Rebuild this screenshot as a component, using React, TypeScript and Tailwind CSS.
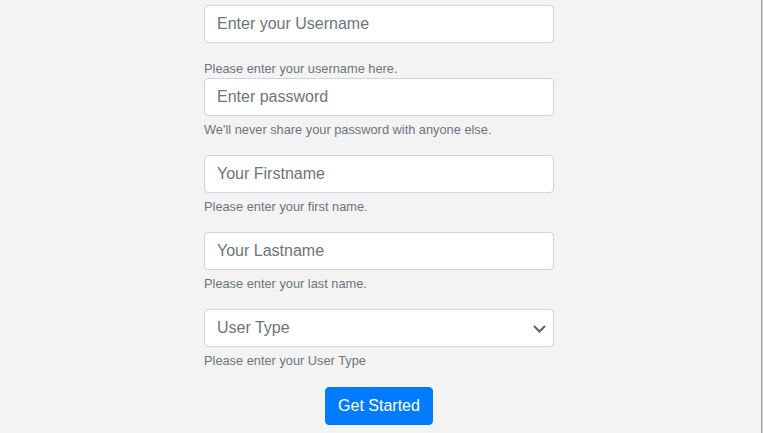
import { useState } from "react";

const fieldBase =
  "block w-full h-[38px] px-3 text-[16px] leading-6 bg-white border border-[#ced4da] rounded-[4px] outline-none";

const inputCls = `${fieldBase} text-[#495057] placeholder:text-[#6c757d]`;

const helpCls = "block text-[12.8px] leading-[19px] text-[#6c757d]";

export default function App() {
  const [userType, setUserType] = useState("");

  return (
    <div
      className="flex w-full h-[433px] bg-[#f3f3f3]"
      style={{ fontFamily: '"Liberation Sans", Arial, sans-serif' }}
    >
      <div className="w-[758px] pt-[5px]">
        <form className="w-[350px] mx-auto" onSubmit={(e) => e.preventDefault()}>
          <div>
            <input type="text" placeholder="Enter your Username" className={inputCls} />
            <small className={`${helpCls} mt-[16px]`}>Please enter your username here.</small>
          </div>

          <div className="mb-4">
            <input type="password" placeholder="Enter password" className={inputCls} />
            <small className={`${helpCls} mt-1`}>We'll never share your password with anyone else.</small>
          </div>

          <div className="mb-4">
            <input type="text" placeholder="Your Firstname" className={inputCls} />
            <small className={`${helpCls} mt-1`}>Please enter your first name.</small>
          </div>

          <div className="mb-4">
            <input type="text" placeholder="Your Lastname" className={inputCls} />
            <small className={`${helpCls} mt-1`}>Please enter your last name.</small>
          </div>

          <div className="mb-[17px]">
            <div className="relative">
              <select
                value={userType}
                onChange={(e) => setUserType(e.target.value)}
                className={`${fieldBase} appearance-none text-[#6c757d]`}
              >
                <option value="">User Type</option>
                <option value="student">Student</option>
                <option value="teacher">Teacher</option>
              </select>
              <svg
                className="absolute right-[8px] top-[16px] pointer-events-none"
                width="13"
                height="8"
                viewBox="0 0 13 8"
                fill="none"
              >
                <path d="M1 1l5.5 5.5L12 1" stroke="#5f5f5f" strokeWidth="2" />
              </svg>
            </div>
            <small className={`${helpCls} mt-1`}>Please enter your User Type</small>
          </div>

          <div className="text-center">
            <button
              type="submit"
              className="h-[38px] px-3 text-[16px] leading-6 text-white bg-[#007bff] border border-[#007bff] rounded-[4px]"
            >
              Get Started
            </button>
          </div>
        </form>
      </div>
      <div className="w-[3px]" />
      <div className="w-[1px] bg-[#a6a6a6]" />
      <div className="w-[1px] bg-[#cfcfcf]" />
    </div>
  );
}
